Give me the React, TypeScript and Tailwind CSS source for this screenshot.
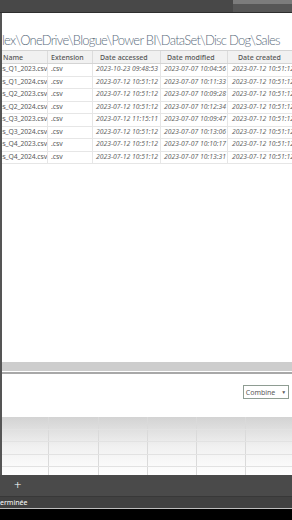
import React from "react";

const rows = [
  ["Sales_Q1_2023.csv", "2023-10-23 09:48:53", "2023-07-07 10:04:56"],
  ["Sales_Q1_2024.csv", "2023-07-12 10:51:12", "2023-07-07 10:11:33"],
  ["Sales_Q2_2023.csv", "2023-07-12 10:51:12", "2023-07-07 10:09:28"],
  ["Sales_Q2_2024.csv", "2023-07-12 10:51:12", "2023-07-07 10:12:34"],
  ["Sales_Q3_2023.csv", "2023-07-12 11:15:11", "2023-07-07 10:09:47"],
  ["Sales_Q3_2024.csv", "2023-07-12 10:51:12", "2023-07-07 10:13:06"],
  ["Sales_Q4_2023.csv", "2023-07-12 10:51:12", "2023-07-07 10:10:17"],
  ["Sales_Q4_2024.csv", "2023-07-12 10:51:12", "2023-07-07 10:13:31"],
];

export default function App() {
  return (
    <div className="w-[292px] h-[520px] overflow-hidden bg-black flex flex-col font-['Noto_Sans',sans-serif]">
      {/* top window bar */}
      <div className="h-[13px] shrink-0 bg-[#484848] border-b border-[#2e2e2e] flex justify-end items-start">
        <div className="w-[59px] h-[12px] bg-[#575757] flex flex-col">
          <div className="h-[4px] bg-[#7c7c7c]" />
        </div>
      </div>

      {/* main */}
      <div className="h-[462px] shrink-0 flex">
        <div className="w-[2px] bg-[#555555]" />
        <div className="flex-1 flex flex-col bg-white overflow-hidden">
          {/* title */}
          <div className="h-[37px] shrink-0 flex items-end pb-[3px] overflow-hidden whitespace-nowrap">
            <span className="text-[13px] font-light text-[#5d6e7e] leading-none font-['Lato',sans-serif] tracking-[-0.75px]">
              lex\OneDrive\Blogue\Power BI\DataSet\Disc Dog\Sales
            </span>
          </div>

          {/* table */}
          <div className="shrink-0 overflow-hidden">
            <div className="grid grid-cols-[46px_45px_68px_67px_67px] w-[293px] h-[14px] bg-[#f1f1f1] border-t border-b border-[#d4d4d4] text-[7px] text-[#555] font-medium leading-none items-center">
              <div className="pl-[1px] h-full flex items-center border-r border-[#dcdcdc]">Name</div>
              <div className="pl-[3px] h-full flex items-center border-r border-[#dcdcdc]">Extension</div>
              <div className="pl-[7px] h-full flex items-center border-r border-[#dcdcdc]">Date accessed</div>
              <div className="pl-[6px] h-full flex items-center border-r border-[#dcdcdc]">Date modified</div>
              <div className="pl-[10px] h-full flex items-center">Date created</div>
            </div>
            {rows.map((r) => (
              <div
                key={r[0]}
                className="grid grid-cols-[46px_45px_68px_67px_67px] w-[293px] h-[12.5px] border-b border-[#e6e6e6] text-[6.8px] text-[#5a5a5a] leading-none"
              >
                <div className="h-full flex items-center justify-end pr-0 overflow-hidden whitespace-nowrap border-r border-[#e6e6e6] tracking-[-0.1px]">
                  {r[0]}
                </div>
                <div className="h-full flex items-center pl-[3px] border-r border-[#e6e6e6]">.csv</div>
                <div className="h-full flex items-center pl-[3px] italic whitespace-nowrap border-r border-[#e6e6e6] text-[#666]">{r[1]}</div>
                <div className="h-full flex items-center pl-[3px] italic whitespace-nowrap border-r border-[#e6e6e6] text-[#666]">{r[2]}</div>
                <div className="h-full flex items-center pl-[4px] italic whitespace-nowrap overflow-hidden text-[#666]">2023-07-12 10:51:12</div>
              </div>
            ))}
          </div>

          {/* empty area */}
          <div className="flex-1" />

          {/* scroll bar */}
          <div className="h-[9px] shrink-0 bg-[#cdcdcd]" />
          <div className="h-[1px] shrink-0 bg-white" />
          <div className="h-[2px] shrink-0 bg-[#a8a8a8]" />

          {/* button area */}
          <div className="h-[43px] shrink-0 flex justify-end items-start pt-[11px] pr-[3px]">
            <div className="w-[46px] h-[14px] border border-[#8e9c92] bg-white flex items-center justify-center gap-[6px] text-[7px] text-[#5a5a5a] leading-none">
              <span>Combine</span>
              <span className="text-[5px]">▼</span>
            </div>
          </div>

          {/* spreadsheet grid */}
          <div className="h-[58px] shrink-0 bg-gradient-to-b from-[#d3d3d3] via-[#f0f0f0] to-white flex flex-col">
            {[0, 1, 2, 3].map((i) => (
              <div key={i} className="h-[12.5px] grid grid-cols-[47px_50px_49px_49px_49px_1fr] border-b border-[#e2e2e2]">
                <div className="border-r border-[#dadada]" />
                <div className="border-r border-[#dadada]" />
                <div className="border-r border-[#dadada]" />
                <div className="border-r border-[#dadada]" />
                <div className="border-r border-[#dadada]" />
                <div />
              </div>
            ))}
            <div className="flex-1 grid grid-cols-[47px_50px_49px_49px_49px_1fr]">
              <div className="border-r border-[#dadada]" />
              <div className="border-r border-[#dadada]" />
              <div className="border-r border-[#dadada]" />
              <div className="border-r border-[#dadada]" />
              <div className="border-r border-[#dadada]" />
              <div />
            </div>
          </div>
        </div>
      </div>

      {/* sheet tabs bar */}
      <div className="h-[21px] shrink-0 bg-[#4a4a4a] flex items-center pl-[14px]">
        <span className="text-white text-[13px] leading-none font-light">+</span>
      </div>
      {/* status bar */}
      <div className="h-[12px] shrink-0 bg-[#414141] border-t border-[#383838] flex items-center">
        <span className="text-[7px] text-white leading-none">erminée</span>
      </div>
      <div className="h-[1px] shrink-0 bg-[#bdbdbd]" />
      <div className="flex-1 bg-black" />
    </div>
  );
}
